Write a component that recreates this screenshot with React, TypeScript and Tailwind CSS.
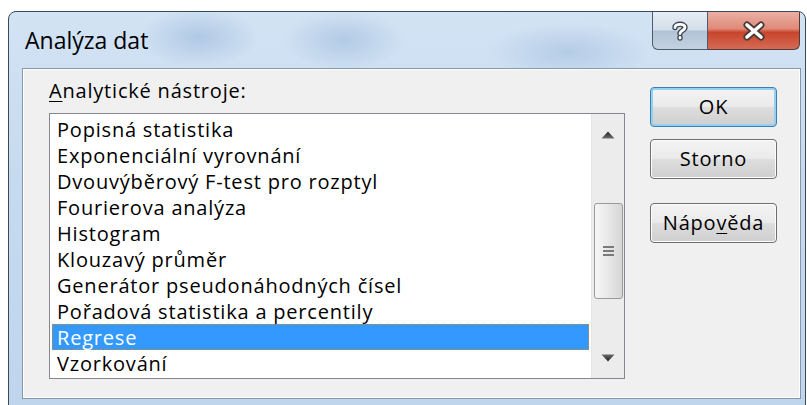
import React from "react";

const tools = [
  "Popisná statistika",
  "Exponenciální vyrovnání",
  "Dvouvýběrový F-test pro rozptyl",
  "Fourierova analýza",
  "Histogram",
  "Klouzavý průměr",
  "Generátor pseudonáhodných čísel",
  "Pořadová statistika a percentily",
  "Regrese",
  "Vzorkování",
];

const font = { fontFamily: '"Open Sans", "Noto Sans", "DejaVu Sans", sans-serif' };

function HelpGlyph() {
  return (
    <svg width="20" height="22" viewBox="0 0 20 22">
      <path
        d="M5 7.5 C5 3.5 15 3 15 7.5 C15 10.5 10 10.5 10 13.5 M10 17.5 L10 18"
        fill="none"
        stroke="#3b4652"
        strokeWidth="5.4"
        strokeLinecap="round"
      />
      <path
        d="M5 7.5 C5 3.5 15 3 15 7.5 C15 10.5 10 10.5 10 13.5 M10 17.5 L10 18"
        fill="none"
        stroke="#ffffff"
        strokeWidth="2.8"
        strokeLinecap="round"
      />
    </svg>
  );
}

function CloseGlyph() {
  return (
    <svg width="28" height="20" viewBox="0 0 28 20">
      <path d="M7 4 L21 16 M21 4 L7 16" stroke="#4a3a38" strokeWidth="7" strokeLinecap="round" />
      <path d="M7 4 L21 16 M21 4 L7 16" stroke="#ffffff" strokeWidth="3.6" strokeLinecap="round" />
    </svg>
  );
}

function Arrow({ up }: { up?: boolean }) {
  return (
    <svg width="14" height="8" viewBox="0 0 14 8">
      <defs>
        <linearGradient id={up ? "au" : "ad"} x1="0" y1="0" x2="0" y2="1">
          <stop offset="0" stopColor={up ? "#202020" : "#6a6a6a"} />
          <stop offset="1" stopColor={up ? "#707070" : "#202020"} />
        </linearGradient>
      </defs>
      <path d={up ? "M7 0.5 L13.5 7.5 L0.5 7.5 Z" : "M0.5 0.5 L13.5 0.5 L7 7.5 Z"} fill={`url(#${up ? "au" : "ad"})`} />
    </svg>
  );
}

function DialogButton({ children, focused }: { children: React.ReactNode; focused?: boolean }) {
  return (
    <div
      className={
        "flex h-[40px] w-[127px] items-center justify-center rounded-[4px] border text-[20px] tracking-[0.8px] text-black " +
        (focused
          ? "border-[#3c7fb1] shadow-[inset_0_0_0_2px_#94d0f4]"
          : "border-[#707070] shadow-[inset_0_0_0_1px_#fcfcfc]")
      }
      style={{
        ...font,
        background: "linear-gradient(to bottom, #f3f3f3 0%, #ebebeb 48%, #dddddd 52%, #cfcfcf 100%)",
      }}
    >
      {children}
    </div>
  );
}

export default function App() {
  return (
    <div className="h-[405px] w-[807px] overflow-hidden bg-white pl-[8px] pt-[11px]">
      <div
        className="flex h-[420px] w-[798px] flex-col rounded-t-[8px] border border-[#3b4a5a] pl-[13px] pr-[5px]"
        style={{
          background:
            "radial-gradient(ellipse 60px 30px at 190px 25px, rgba(150,180,215,0.55), transparent), radial-gradient(ellipse 60px 30px at 335px 28px, rgba(150,180,215,0.5), transparent), radial-gradient(ellipse 80px 30px at 560px 40px, rgba(150,180,215,0.45), transparent), linear-gradient(to bottom, #d2e3f4 0%, #c6daef 40%, #bed5ec 100%)",
        }}
      >
        {/* caption bar */}
        <div className="flex h-[56px] items-start justify-between">
          <div className="pl-[3px] pt-[14px] text-[23px] leading-[28px] text-black" style={font}>
            Analýza dat
          </div>
          <div className="flex">
            <div
              className="flex h-[38px] w-[56px] items-center justify-center rounded-bl-[6px] border border-t-0 border-[#4e5c6b]"
              style={{
                background:
                  "linear-gradient(to bottom, #e6edf5 0%, #d3deea 48%, #b3c3d6 52%, #c3d2e2 100%)",
              }}
            >
              <HelpGlyph />
            </div>
            <div
              className="flex h-[38px] w-[92px] items-center justify-center rounded-br-[6px] border border-l-0 border-t-0 border-[#5a3a36]"
              style={{
                background:
                  "linear-gradient(to bottom, #eab0a4 0%, #df8a79 45%, #c9442c 55%, #d46b55 100%)",
              }}
            >
              <CloseGlyph />
            </div>
          </div>
        </div>

        {/* client area */}
        <div className="flex h-[331px] w-[779px] border border-[#8796a8] bg-[#f0f0f0] shadow-[inset_0_0_0_1px_#ffffff]">
          <div className="flex w-[603px] flex-col pl-[26px] pt-[9px]">
            <div className="h-[35px] text-[20px] leading-[26px] tracking-[0.8px] text-black" style={font}>
              <span className="underline decoration-1 underline-offset-[3px]">A</span>nalytické nástroje:
            </div>
            <div className="flex h-[266px] w-[576px] border border-[#828790] bg-white">
              <div className="flex flex-1 flex-col pl-[2px] pr-[2px] pt-[2px]">
                {tools.map((t) => {
                  const sel = t === "Regrese";
                  return (
                    <div
                      key={t}
                      className={
                        "h-[26px] whitespace-nowrap pl-[4px] text-[20px] leading-[25px] tracking-[0.8px] " +
                        (sel
                          ? "border border-dotted border-[#c98a3a] bg-[#3399ff] text-white"
                          : "border border-transparent text-black")
                      }
                      style={font}
                    >
                      {t}
                    </div>
                  );
                })}
              </div>
              {/* vertical scroll bar */}
              <div className="flex w-[33px] flex-col items-center border-l border-[#e6e6e6] bg-[#ececec]">
                <div className="flex h-[38px] items-center justify-center pt-[4px]">
                  <Arrow up />
                </div>
                <div className="h-[51px]" />
                <div
                  className="flex h-[96px] w-[29px] items-center justify-center rounded-[3px] border border-[#9a9a9a]"
                  style={{ background: "linear-gradient(to right, #f6f6f6 0%, #e9e9e9 45%, #d6d6d6 100%)" }}
                >
                  <div className="flex flex-col gap-[2px]">
                    <div className="h-[2px] w-[11px] bg-[#7a7a7a]" />
                    <div className="h-[2px] w-[11px] bg-[#7a7a7a]" />
                    <div className="h-[2px] w-[11px] bg-[#7a7a7a]" />
                  </div>
                </div>
                <div className="flex flex-1 items-end justify-center pb-[16px]">
                  <Arrow />
                </div>
              </div>
            </div>
          </div>
          <div className="flex flex-col pl-[24px] pt-[18px]">
            <DialogButton focused>OK</DialogButton>
            <div className="h-[12px]" />
            <DialogButton>Storno</DialogButton>
            <div className="h-[24px]" />
            <DialogButton>
              <span>
                Nápo<span className="underline decoration-1 underline-offset-[3px]">v</span>ěda
              </span>
            </DialogButton>
          </div>
        </div>
      </div>
    </div>
  );
}
